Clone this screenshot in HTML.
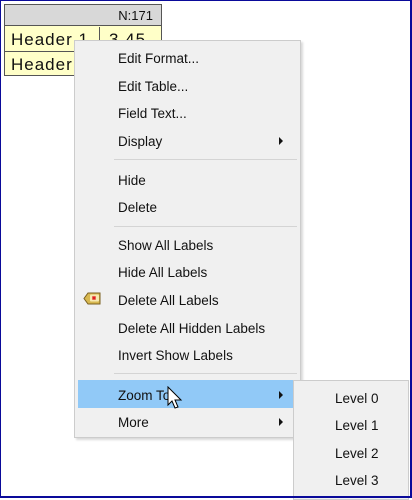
<!DOCTYPE html>
<html><head><meta charset="utf-8"><style>
*{margin:0;padding:0;box-sizing:border-box}
body{width:412px;height:498px;overflow:hidden;background:#fff;font-family:"Liberation Sans",sans-serif;position:relative}
.frame{position:absolute;left:0;top:0;width:412px;height:498px;border:1px solid #0a0a9a;border-right-width:2px;border-bottom-width:2px}
.tbl{position:absolute;left:4px;top:4px;width:158px;height:72px;border:1px solid #555;background:#ffffc8}
.th{position:absolute;left:0;top:0;width:156px;height:21px;background:#d8d8d8;border-bottom:1px solid #555;font-size:13px;text-align:right;padding-right:8px;line-height:21px;color:#111}
.r{position:absolute;left:0;width:156px;height:25px;font-size:17px;letter-spacing:1px;line-height:25px;color:#111}
.r1{top:22px;border-bottom:1px solid #555}.r2{top:47px}
.r span{position:absolute;left:6px}
.vd{position:absolute;left:94px;top:22px;width:1px;height:25px;background:#555}
.menu{position:absolute;left:74px;top:40px;width:227px;height:398px;background:#f0f0f0;border:1px solid #ccc;box-shadow:2px 2px 2px rgba(0,0,0,.15)}
.it{position:absolute;left:43px;font-size:13.5px;color:#111;line-height:16px}
.sep{position:absolute;left:39px;width:183px;height:1px;background:#d4d4d4}
.arr{position:absolute;left:204px;width:0;height:0;border-left:4px solid #111;border-top:4px solid transparent;border-bottom:4px solid transparent}
.hl{position:absolute;left:3px;top:339px;width:216px;height:28px;background:#91c9f7}
.sub{position:absolute;left:293px;top:380px;width:116px;height:120px;background:#f0f0f0;border:1px solid #ccc}
.sub div{position:absolute;left:41px;font-size:13.5px;color:#111}
</style></head><body>
<div class="tbl"><div class="th">N:171</div>
<div class="r r1"><span>Header 1</span><span style="left:104px">3.45</span></div>
<div class="vd"></div>
<div class="r r2"><span>Header</span></div></div>
<div class="menu">
<div class="it" style="top:10px">Edit Format...</div>
<div class="it" style="top:38px">Edit Table...</div>
<div class="it" style="top:65px">Field Text...</div>
<div class="it" style="top:93px">Display</div><div class="arr" style="top:96px"></div>
<div class="sep" style="top:118px"></div>
<div class="it" style="top:132px">Hide</div>
<div class="it" style="top:159px">Delete</div>
<div class="sep" style="top:185px"></div>
<div class="it" style="top:197px">Show All Labels</div>
<div class="it" style="top:224px">Hide All Labels</div>
<svg style="position:absolute;left:8px;top:251px" width="19" height="14"><path d="M5 1h12v11H5L1 6.5z" fill="#d8b850" stroke="#7a6020"/><rect x="7" y="2.5" width="9" height="7" rx="1" fill="#f6e9b0"/><path d="M9.5 4.5l3 3M12.5 4.5l-3 3" stroke="#e02020" stroke-width="1.6"/></svg>
<div class="it" style="top:252px">Delete All Labels</div>
<div class="it" style="top:280px">Delete All Hidden Labels</div>
<div class="it" style="top:307px">Invert Show Labels</div>
<div class="sep" style="top:332px"></div>
<div class="hl"></div>
<div class="it" style="top:347px">Zoom To</div><div class="arr" style="top:350px"></div>
<div class="it" style="top:374px">More</div><div class="arr" style="top:377px"></div>
<svg style="position:absolute;left:92px;top:345px" width="16" height="24"><path d="M1 1v18l4-4 3 7 3-1-3-7h6z" fill="#fff" stroke="#000"/></svg>
</div>
<div class="sub">
<div style="top:10px">Level 0</div>
<div style="top:37px">Level 1</div>
<div style="top:65px">Level 2</div>
<div style="top:92px">Level 3</div>
</div>
<div class="frame"></div>
</body></html>
